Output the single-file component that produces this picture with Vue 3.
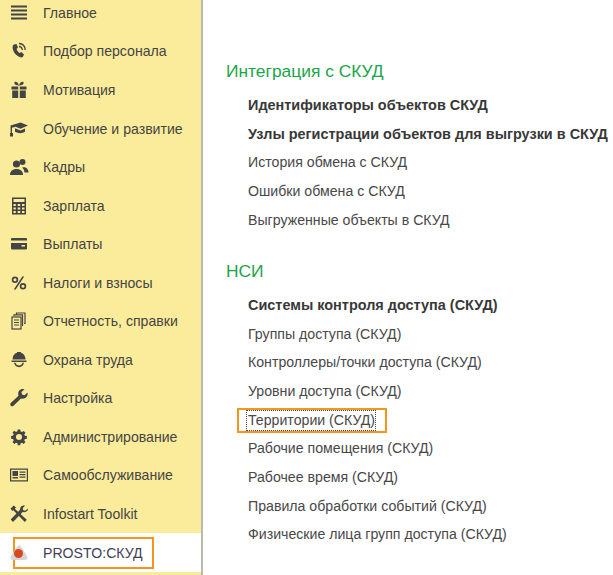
<script setup>
const menu = [
  { label: 'Главное', icon: 'menu' },
  { label: 'Подбор персонала', icon: 'phone' },
  { label: 'Мотивация', icon: 'gift' },
  { label: 'Обучение и развитие', icon: 'cap' },
  { label: 'Кадры', icon: 'people' },
  { label: 'Зарплата', icon: 'calc' },
  { label: 'Выплаты', icon: 'card' },
  { label: 'Налоги и взносы', icon: 'percent' },
  { label: 'Отчетность, справки', icon: 'docs' },
  { label: 'Охрана труда', icon: 'helmet' },
  { label: 'Настройка', icon: 'wrench' },
  { label: 'Администрирование', icon: 'gear' },
  { label: 'Самообслуживание', icon: 'badge' },
  { label: 'Infostart Toolkit', icon: 'tools' },
]
const groups = [
  {
    title: 'Интеграция с СКУД',
    links: [
      { t: 'Идентификаторы объектов СКУД', b: true },
      { t: 'Узлы регистрации объектов для выгрузки в СКУД', b: true },
      { t: 'История обмена с СКУД' },
      { t: 'Ошибки обмена с СКУД' },
      { t: 'Выгруженные объекты в СКУД' },
    ],
  },
  {
    title: 'НСИ',
    links: [
      { t: 'Системы контроля доступа (СКУД)', b: true },
      { t: 'Группы доступа (СКУД)' },
      { t: 'Контроллеры/точки доступа (СКУД)' },
      { t: 'Уровни доступа (СКУД)' },
      { t: 'Территории (СКУД)', focus: true },
      { t: 'Рабочие помещения (СКУД)' },
      { t: 'Рабочее время (СКУД)' },
      { t: 'Правила обработки событий (СКУД)' },
      { t: 'Физические лица групп доступа (СКУД)' },
    ],
  },
]
</script>

<template>
  <div class="page">
    <nav class="side">
      <div v-for="m in menu" :key="m.label" class="item">
        <svg class="ico" viewBox="0 0 20 20" fill="#444">
          <template v-if="m.icon === 'menu'">
            <rect x="2" y="2.500" width="16" height="2" /><rect x="2" y="6.500" width="16" height="2" /><rect x="2" y="10.500" width="16" height="2" /><rect x="2" y="14.500" width="16" height="2" />
          </template>
          <template v-else-if="m.icon === 'phone'">
            <path d="M5 3.500 7.500 3 9 6.500 7.600 8c.5 1.600 1.500 3 3 4l1.700-1 2.700 2.500-1.200 2.500c-.8.600-2 .5-3.200 0C6.500 14.500 3.500 10 3.600 6c0-1 .5-2 1.400-2.500Z" />
            <path d="M10 2.500c3.500.2 6 2.800 6.200 6.500M10 5.500c1.900.1 3.200 1.500 3.300 3.500" fill="none" stroke="#444" stroke-width="1.300" />
          </template>
          <template v-else-if="m.icon === 'gift'">
            <rect x="2.500" y="6.500" width="6.700" height="3" /><rect x="10.800" y="6.500" width="6.700" height="3" /><rect x="3.200" y="10.500" width="6" height="7.500" /><rect x="10.800" y="10.500" width="6" height="7.500" />
            <path d="M10 5.800C8 5.300 5.500 5 5.300 3.100 5.200 1.500 7.200 1.300 8.200 2.200 9 2.900 9.700 4.200 10 5.800ZM10 5.800c2-.5 4.500-.8 4.700-2.700.1-1.600-1.900-1.800-2.900-.9C11 2.900 10.300 4.200 10 5.800Z" />
          </template>
          <template v-else-if="m.icon === 'cap'">
            <path d="M1.500 6.500 11.500 3.500 19 6.500 11.500 9.700 6.500 7.700 3 8.700V14H1.700Z" />
            <path d="M6 9.300 11.500 11.500 16 9.600v3.200c-2.500 1.800-6.800 1.800-10 0Z" />
            <rect x="1" y="14" width="3" height="3.500" />
          </template>
          <template v-else-if="m.icon === 'people'">
            <circle cx="7.500" cy="7" r="3.600" /><path d="M1 18c0-3.800 2.500-6 6.500-6s6.500 2.200 6.500 6Z" />
            <circle cx="13.500" cy="5" r="3" /><path d="M13.200 10.500c3.800-.7 6.300 1.500 6.300 5h-4c-.2-2-1-3.500-2.300-5Z" />
          </template>
          <template v-else-if="m.icon === 'calc'">
            <path fill-rule="evenodd" d="M3 1.500h14v17H3ZM4.500 3v3h11V3Zm0 5v2h2.300V8Zm4.200 0v2h2.500V8Zm4.300 0v2h2.500V8Zm-8.500 3.500v2h2.300v-2Zm4.200 0v2h2.500v-2Zm4.300 0v2h2.500v-2Zm-8.500 3.500v2h2.300v-2Zm4.200 0v2h2.500v-2Zm4.300 0v2h2.500v-2Z" />
          </template>
          <template v-else-if="m.icon === 'card'">
            <path d="M3 4h14a1 1 0 0 1 1 1v1.500H2V5a1 1 0 0 1 1-1ZM2 9h16v5.500a1 1 0 0 1-1 1H3a1 1 0 0 1-1-1Z" />
            <rect x="12.500" y="11" width="3.500" height="1.500" fill="#fbec9b" />
          </template>
          <template v-else-if="m.icon === 'percent'">
            <path fill-rule="evenodd" d="M6 3.500a3.200 3.200 0 1 1 0 6.500 3.200 3.200 0 0 1 0-6.500Zm0 1.700a1.500 1.500 0 1 0 0 3.100 1.500 1.500 0 0 0 0-3.100ZM14 10a3.200 3.200 0 1 1 0 6.500 3.200 3.200 0 0 1 0-6.500Zm0 1.700a1.500 1.500 0 1 0 0 3.100 1.500 1.500 0 0 0 0-3.100Z" />
            <path d="M13.300 3.500h1.900L6.700 16.500H4.800Z" />
          </template>
          <template v-else-if="m.icon === 'docs'">
            <g fill="none" stroke="#444" stroke-width="1.200">
              <rect x="3" y="6" width="9" height="12" />
              <path d="M5 5V3.800h8.500V14.500H13M7.500 3.300V2H16V12.500H15M5 9h5M5 11.500h5M5 14h5" />
            </g>
          </template>
          <template v-else-if="m.icon === 'helmet'">
            <path d="M3.500 9.500C3.500 5.800 5.500 3.500 8 2.800V2h4v.8c2.500.7 4.500 3 4.500 6.700Z" />
            <path d="M2.500 10.500h15V12h-15Z" />
            <path d="M5 12.800h1.600c.4 1.700 1.700 2.700 3.400 2.700s3-1 3.400-2.700H15c-.5 2.700-2.500 4.400-5 4.400s-4.500-1.700-5-4.400Z" />
          </template>
          <template v-else-if="m.icon === 'wrench'">
            <path d="M18.500 4.500 15.500 7.300 13 6.500 12.500 4 15.500 1.300C12.500.3 9 2.300 9.200 6c0 .7.100 1.200.3 1.700L2 14.800c-1 1-1 2.200-.2 3 .8.800 2 .8 3-.2L12 10.500c3.800 1 7.500-2 6.500-6Z" />
          </template>
          <template v-else-if="m.icon === 'gear'">
            <path fill-rule="evenodd" d="M8.700 2.500h2.600l.3 2 1.400.6 1.700-1.200 1.800 1.800-1.200 1.700.6 1.400 2 .3v2.600l-2 .3-.6 1.400 1.200 1.700-1.800 1.800-1.700-1.200-1.400.6-.3 2H8.700l-.3-2-1.400-.6-1.700 1.200-1.800-1.800 1.200-1.700-.6-1.400-2-.3V8.900l2-.3.6-1.400-1.200-1.700 1.800-1.800 1.700 1.200 1.400-.6ZM10 7a3 3 0 1 0 0 6 3 3 0 0 0 0-6Z" />
          </template>
          <template v-else-if="m.icon === 'badge'">
            <path fill-rule="evenodd" d="M1 3.500h18v13H1Zm1.200 1.200v10.600h15.600V4.700Z" />
            <rect x="3.500" y="6" width="5.500" height="5" /><rect x="3.500" y="12" width="5.500" height="1.500" />
            <path d="M10.500 6.500h6v1.200h-6ZM10.500 9h6v1.200h-6ZM10.500 11.500h6v1.200h-6Z" />
          </template>
          <template v-else-if="m.icon === 'tools'">
            <path d="M1.500 4.500 4.800 1.500 7 3.600 5.800 4.800 17.800 15.800 15.800 18 4.300 6.300 3.300 7Z" />
            <path d="M18.800 4.500 16.300 6.800 14.300 6.300 13.700 4.300 16 1.800C13.500 1 10.800 2.700 11 5.800L1.700 15.500 4 18 13.700 8c3 .7 5.800-1.200 5.100-3.500Z" />
          </template>
        </svg>
        <span>{{ m.label }}</span>
      </div>
      <div class="item active">
        <div class="active-box">
          <svg class="ico logo" viewBox="0 0 20 20">
            <path d="M10 2c1.500 0 7 9 8.500 12.500.4 1.200-.4 2-1.500 2.200-4 .6-10 .6-14 0-1.100-.2-1.900-1-1.500-2.200C3 11 8.500 2 10 2Z" fill="#d6d6d6" />
            <circle cx="9.500" cy="10.500" r="4.500" fill="#d8481e" />
          </svg>
          <span>PROSTO:СКУД</span>
        </div>
      </div>
      <div class="rest"></div>
    </nav>
    <main class="main">
      <section v-for="g in groups" :key="g.title" class="group">
        <h2>{{ g.title }}</h2>
        <ul>
          <li v-for="l in g.links" :key="l.t" :class="{ bold: l.b }">
            <span v-if="l.focus" class="focus"><span class="dots">{{ l.t }}</span></span>
            <template v-else>{{ l.t }}</template>
          </li>
        </ul>
      </section>
    </main>
  </div>
</template>

<style scoped>
.page {
  display: flex;
  width: 613px;
  height: 575px;
  overflow: hidden;
  background: #fff;
  font-family: "Liberation Sans", Arial, sans-serif;
  font-size: 14.1px;
  color: #444;
}
.side {
  flex: 0 0 201px;
  display: flex;
  flex-direction: column;
  margin-top: -6.4px;
  height: 581.4px;
  background: #fbec9b;
  border-right: 2px solid #b9b9b0;
}
.item {
  flex: 0 0 38.55px;
  display: flex;
  align-items: center;
  gap: 14px;
  padding-left: 9px;
}
.ico {
  flex: none;
  width: 20px;
  height: 20px;
}
.active {
  background: #fff;
  padding-left: 0;
}
.active-box {
  display: flex;
  align-items: center;
  gap: 14px;
  box-sizing: border-box;
  width: 141px;
  height: 32px;
  margin-left: 13px;
  border: 2px solid #f7941d;
  color: #3f4058;
}
.logo {
  margin-left: -6px;
}
.rest {
  flex: 1;
}
.main {
  flex: 1;
  padding: 59px 0 0 23px;
  white-space: nowrap;
  font-size: 14.15px;
  color: #484848;
}
.group + .group {
  margin-top: 25px;
}
h2 {
  margin: 0 0 8px;
  font-size: 17.4px;
  font-weight: 400;
  line-height: 24px;
  color: #1aa64a;
}
ul {
  list-style: none;
  margin: 0;
  padding: 0 0 0 22px;
}
li {
  height: 28.63px;
  line-height: 28.63px;
}
.bold {
  font-size: 14.45px;
  font-weight: 700;
  color: #383838;
}
.focus {
  display: inline-block;
  box-sizing: border-box;
  width: 150px;
  height: 25px;
  line-height: 19px;
  margin-left: -11px;
  padding: 0 0 0 7px;
  border: 2px solid #f7941d;
  vertical-align: middle;
}
.dots {
  display: inline-block;
  outline: 1px dotted #444;
  outline-offset: -1px;
  line-height: 21px;
  padding: 0 1px 0 2px;
}
</style>
